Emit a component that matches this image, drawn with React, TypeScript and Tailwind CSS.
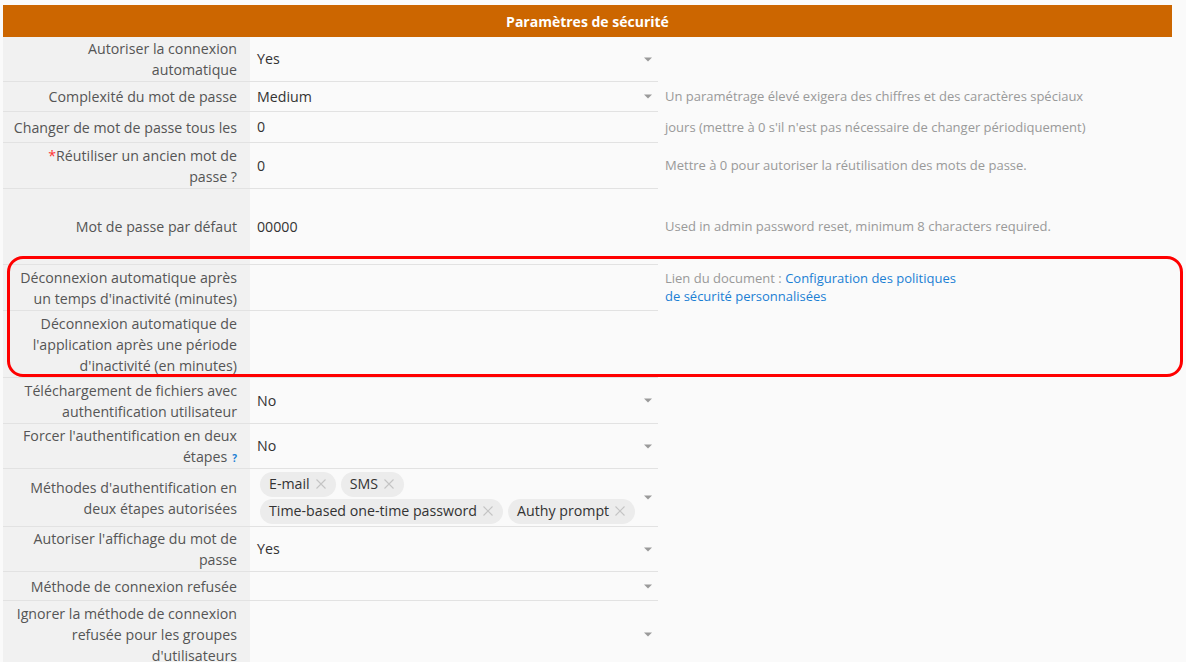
import React from "react";

type Row = {
  label: string[];
  required?: boolean;
  hint?: boolean;
  value?: string;
  select?: boolean;
  tags?: string[][];
  help?: React.ReactNode;
  helpSpan?: boolean;
  noHelp?: boolean;
  h: string;
};

const rows: Row[] = [
  { label: ["Autoriser la connexion", "automatique"], value: "Yes", select: true, h: "min-h-[45px]" },
  {
    label: ["Complexité du mot de passe"],
    value: "Medium",
    select: true,
    help: "Un paramétrage élevé exigera des chiffres et des caractères spéciaux",
    h: "min-h-[30px]",
  },
  {
    label: ["Changer de mot de passe tous les"],
    value: "0",
    help: "jours (mettre à 0 s'il n'est pas nécessaire de changer périodiquement)",
    h: "min-h-[31px]",
  },
  {
    label: ["Réutiliser un ancien mot de", "passe ?"],
    required: true,
    value: "0",
    help: "Mettre à 0 pour autoriser la réutilisation des mots de passe.",
    h: "min-h-[46px]",
  },
  {
    label: ["Mot de passe par défaut"],
    value: "00000",
    help: "Used in admin password reset, minimum 8 characters required.",
    h: "min-h-[76px]",
  },
  {
    label: ["Déconnexion automatique après", "un temps d'inactivité (minutes)"],
    helpSpan: true,
    help: (
      <>
        Lien du document :{" "}
        <span className="text-[#1a7fd4]">Configuration des politiques</span>
        <br />
        <span className="text-[#1a7fd4]">de sécurité personnalisées</span>
      </>
    ),
    h: "min-h-[46px]",
  },
  {
    label: ["Déconnexion automatique de", "l'application après une période", "d'inactivité (en minutes)"],
    noHelp: true,
    h: "min-h-[67px]",
  },
  {
    label: ["Téléchargement de fichiers avec", "authentification utilisateur"],
    value: "No",
    select: true,
    h: "min-h-[46px]",
  },
  {
    label: ["Forcer l'authentification en deux", "étapes"],
    hint: true,
    value: "No",
    select: true,
    h: "min-h-[45px]",
  },
  {
    label: ["Méthodes d'authentification en", "deux étapes autorisées"],
    select: true,
    tags: [["E-mail", "SMS"], ["Time-based one-time password", "Authy prompt"]],
    h: "min-h-[58px]",
  },
  {
    label: ["Autoriser l'affichage du mot de", "passe"],
    value: "Yes",
    select: true,
    h: "min-h-[45px]",
  },
  { label: ["Méthode de connexion refusée"], select: true, h: "min-h-[29px]" },
  {
    label: ["Ignorer la méthode de connexion", "refusée pour les groupes", "d'utilisateurs"],
    select: true,
    h: "min-h-[67px]",
  },
];

function Arrow() {
  return (
    <svg width="8" height="5" viewBox="0 0 8 5" className="shrink-0">
      <path d="M0 0.5 L8 0.5 L4 4.5 Z" fill="#9a9a9a" />
    </svg>
  );
}

function Tag({ text }: { text: string }) {
  return (
    <span className="flex h-[25px] items-center gap-[6px] rounded-full bg-[#ececec] pl-[9px] pr-[10px] text-[14.2px] text-[#333]">
      {text}
      <svg width="10" height="10" viewBox="0 0 10 10">
        <path d="M0.5 0.5 L9.5 9.5 M9.5 0.5 L0.5 9.5" stroke="#c4c4c4" strokeWidth="1.1" />
      </svg>
    </span>
  );
}

export default function App() {
  return (
    <div className="relative min-h-[662px] bg-[#fafafa] px-[3px] pt-[5px] font-['Open_Sans',sans-serif] text-[14px]">
      <div className="flex h-[32px] w-[1169px] items-center justify-center bg-[#cc6600] text-[14px] font-bold text-white">
        Paramètres de sécurité
      </div>

      <div className="grid w-[1169px] grid-cols-[247px_408px_1fr]">
        {rows.map((r, i) => (
          <React.Fragment key={i}>
            <div className="flex items-center justify-end border-b border-[#e2e2e2] bg-[#f1f1f1] py-px pl-2 pr-[13px] text-right text-[14.2px] leading-[21px] text-[#555]">
              <div>
                {r.label.map((l, j) => (
                  <div key={j} className="whitespace-nowrap">
                    {j === 0 && r.required && <span className="text-[#ff3333]">*</span>}
                    {l}
                    {j === r.label.length - 1 && r.hint && (
                      <span className="ml-[5px] align-middle text-[10px] font-bold leading-none text-[#1a7fd4]">
                        ?
                      </span>
                    )}
                  </div>
                ))}
              </div>
            </div>

            <div
              className={`flex items-center justify-between border-b border-[#e2e2e2] pl-[7px] pr-[6px] text-[14.2px] text-[#333] ${r.h}`}
            >
              {r.tags ? (
                <div className="ml-[3px] flex flex-col gap-[2px] pb-[2px] pt-[2px]">
                  {r.tags.map((line, k) => (
                    <div key={k} className="flex gap-[5px]">
                      {line.map((t) => (
                        <Tag key={t} text={t} />
                      ))}
                    </div>
                  ))}
                </div>
              ) : (
                <span>{r.value}</span>
              )}
              {r.select && <Arrow />}
            </div>

            {!r.noHelp &&
              (r.helpSpan ? (
                <div className="row-span-2 pl-[7px] pt-[4px] text-[13px] leading-[18px] text-[#999]">
                  {r.help}
                </div>
              ) : (
                <div className="flex items-center pl-[7px] text-[13px] text-[#999]">{r.help}</div>
              ))}
          </React.Fragment>
        ))}
      </div>

      <div className="pointer-events-none absolute left-[7px] top-[256px] h-[121px] w-[1176px] rounded-[16px] border-[3px] border-[#ff0000]" />
    </div>
  );
}
